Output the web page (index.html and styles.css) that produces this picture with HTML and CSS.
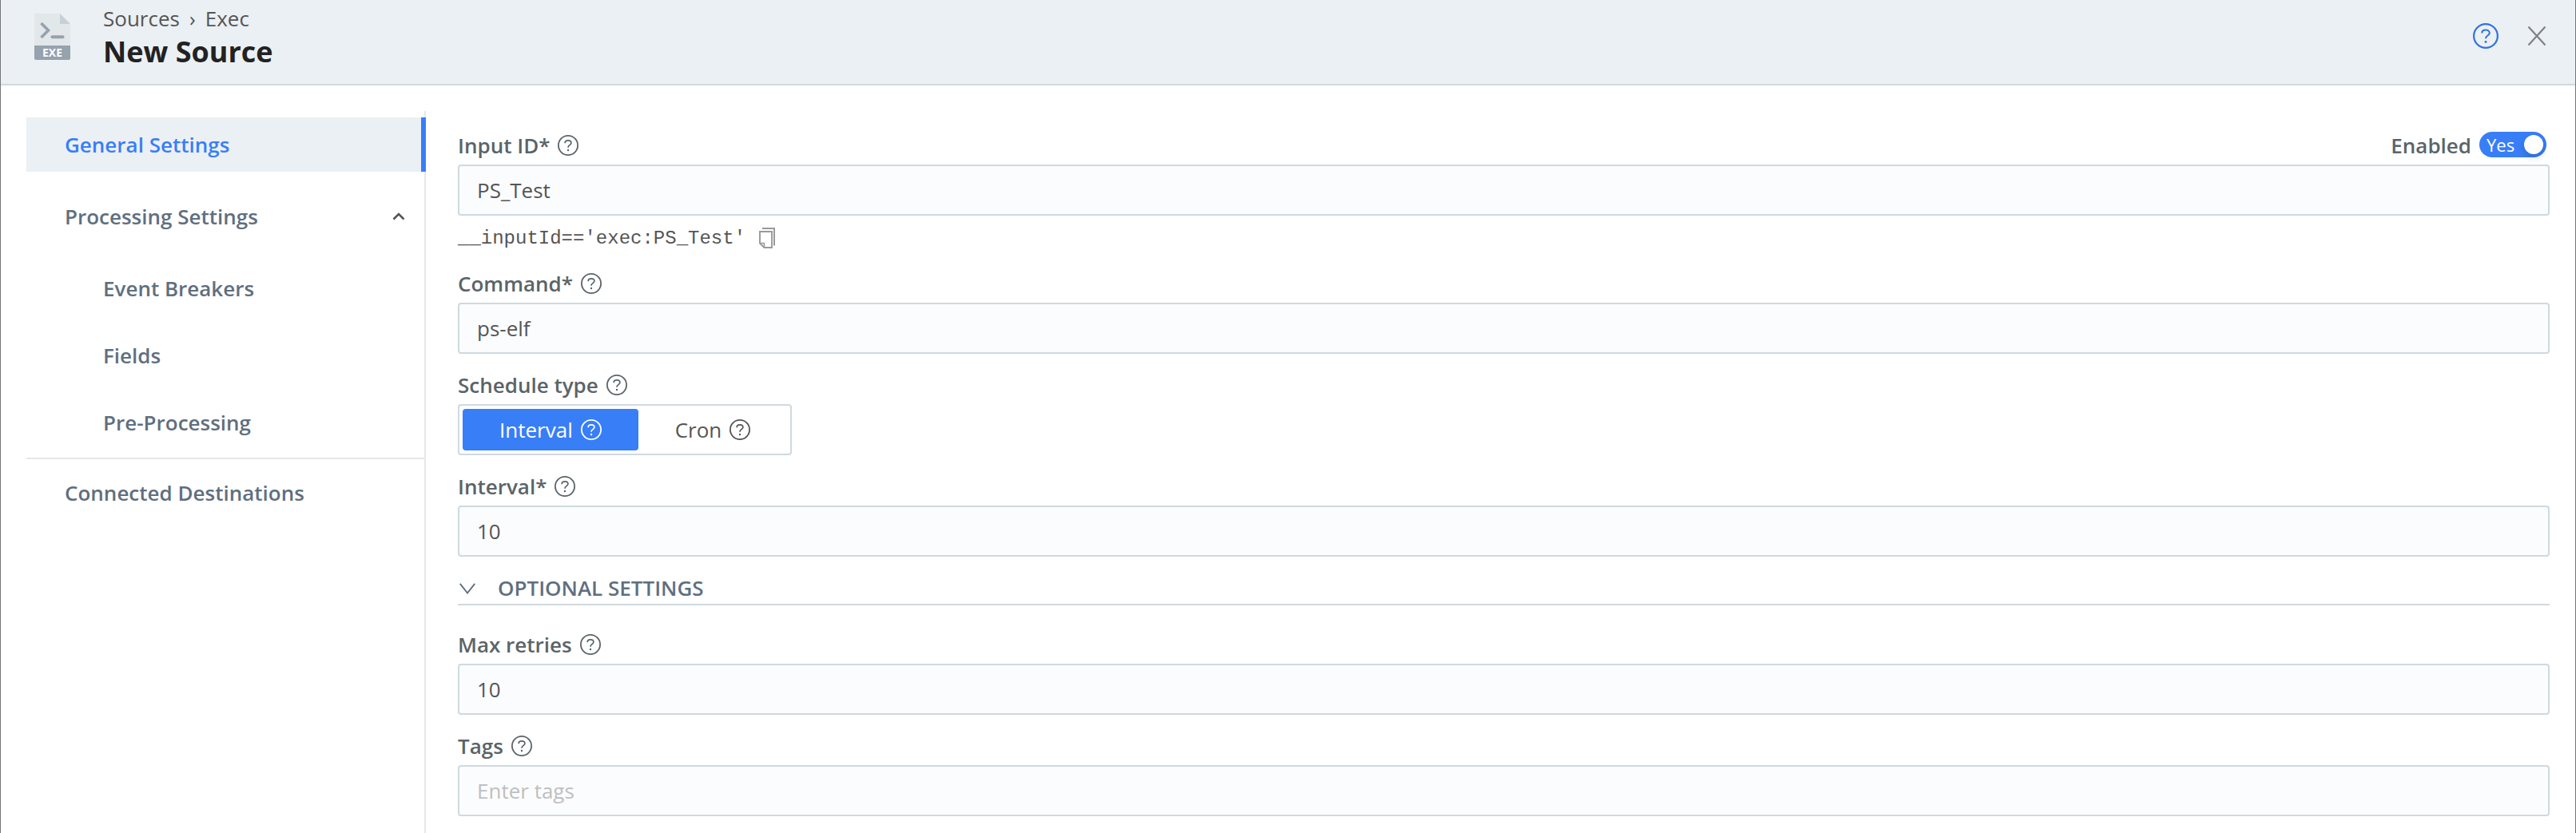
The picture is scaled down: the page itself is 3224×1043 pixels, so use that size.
FILE: index.html
```html
<!DOCTYPE html>
<html lang="en">

<head>
    <meta charset="UTF-8">
    <meta name="viewport" content="width=device-width, initial-scale=1.0">
    <title>New Source</title>
    <link rel="stylesheet" href="styles.css">
</head>

<body>
    <!-- shared icons -->
    <svg class="sprite" width="0" height="0">
        <symbol id="help" viewBox="0 0 26 26">
            <circle cx="13" cy="13" r="12.1" fill="none" stroke="currentColor" stroke-width="1.8" />
            <path d="M9.2 10.2V9.8C9.2 8 10.9 6.9 13 6.9s3.9 1.2 3.9 3.2c0 2.3-3.8 2.700-3.8 5v.6" fill="none" stroke="currentColor" stroke-width="1.7" />
            <circle cx="13" cy="19" r="1.2" fill="currentColor" />
        </symbol>
    </svg>

    <div class="drawer">
        <header class="header">
            <svg class="source-icon" width="45" height="58" viewBox="0 0 45 58">
                <path d="M0 1a1 1 0 0 1 1-1h31l13 13v28H0z" fill="#e2e7ea" />
                <path d="M32 0l13 13H32z" fill="#c6d0d7" />
                <path d="M0 40h45v16a2 2 0 0 1-2 2H2a2 2 0 0 1-2-2z" fill="#96a2ad" />
                <path d="M8.500 12l9 9-9 9" fill="none" stroke="#96a2ad" stroke-width="3.600" />
                <path d="M22.500 29.300h13" fill="none" stroke="#96a2ad" stroke-width="4" stroke-linecap="round" />
                <text class="source-icon-text" x="22.500" y="54" text-anchor="middle">EXE</text>
            </svg>
            <div class="titles">
                <div class="breadcrumb"><span>Sources</span><span class="sep">›</span><span>Exec</span></div>
                <h1>New Source</h1>
            </div>
            <div class="header-actions">
                <svg class="header-help" width="32" height="32"><use href="#help" /></svg>
                <svg class="close" width="24" height="26" viewBox="0 0 24 26">
                    <path d="M1.500 1.500l21 23M22.500 1.500l-21 23" stroke="currentColor" stroke-width="2.200" />
                </svg>
            </div>
        </header>

        <div class="content">
            <nav class="sidebar">
                <a class="nav-item active">General Settings</a>
                <a class="nav-item">Processing Settings
                    <svg class="nav-caret" width="16" height="12" viewBox="0 0 16 12">
                        <path d="M1.500 9.500L8 3l6.500 6.500" fill="none" stroke="currentColor" stroke-width="2.600" />
                    </svg>
                </a>
                <div class="sub-nav">
                    <a class="nav-item">Event Breakers</a>
                    <a class="nav-item">Fields</a>
                    <a class="nav-item">Pre-Processing</a>
                </div>
                <a class="nav-item">Connected Destinations</a>
            </nav>

            <main class="form">
                <div class="field">
                    <div class="label-row">
                        <label for="inputId">Input ID*</label>
                        <svg class="help"><use href="#help" /></svg>
                        <div class="enabled">
                            Enabled
                            <div class="toggle"><span>Yes</span><i class="knob"></i></div>
                        </div>
                    </div>
                    <input type="text" id="inputId" value="PS_Test">
                    <div class="expression">
                        <code>__inputId=='exec:PS_Test'</code>
                        <svg width="20" height="26" viewBox="0 0 20 26" fill="none" stroke="currentColor">
                            <path d="M4 1h15v21.500" stroke-width="2" />
                            <path d="M1 5h15v20H6.500L1 19.500z" stroke-width="1.900" />
                            <path d="M1.500 19.500H6.500V24.500" stroke-width="1.500" />
                        </svg>
                    </div>
                </div>

                <div class="field">
                    <div class="label-row">
                        <label for="command">Command*</label>
                        <svg class="help"><use href="#help" /></svg>
                    </div>
                    <input type="text" id="command" value="ps-elf">
                </div>

                <div class="field">
                    <div class="label-row">
                        <label>Schedule type</label>
                        <svg class="help"><use href="#help" /></svg>
                    </div>
                    <div class="segmented">
                        <div class="segment selected">Interval <svg class="help"><use href="#help" /></svg></div>
                        <div class="segment">Cron <svg class="help"><use href="#help" /></svg></div>
                    </div>
                </div>

                <div class="field">
                    <div class="label-row">
                        <label for="interval">Interval*</label>
                        <svg class="help"><use href="#help" /></svg>
                    </div>
                    <input type="text" id="interval" value="10">
                </div>

                <div class="section-title">
                    <svg width="20" height="14" viewBox="0 0 20 14">
                        <path d="M.800.800L10 12.500 19.200.800" fill="none" stroke="currentColor" stroke-width="1.900" />
                    </svg>
                    OPTIONAL SETTINGS
                </div>

                <div class="field">
                    <div class="label-row">
                        <label for="retries">Max retries</label>
                        <svg class="help"><use href="#help" /></svg>
                    </div>
                    <input type="text" id="retries" value="10">
                </div>

                <div class="field">
                    <div class="label-row">
                        <label for="tags">Tags</label>
                        <svg class="help"><use href="#help" /></svg>
                    </div>
                    <input type="text" id="tags" placeholder="Enter tags">
                </div>
            </main>
        </div>
    </div>
</body>

</html>
```
FILE: styles.css
```css
* {
    box-sizing: border-box;
}

body {
    margin: 0;
    font-family: "Open Sans", "Noto Sans", sans-serif;
    font-size: 26px;
    color: #555;
    background: #fff;
}

svg {
    display: block;
    flex-shrink: 0;
}

.sprite {
    display: none;
}

.drawer {
    height: 100vh;
    display: flex;
    flex-direction: column;
    overflow: hidden;
    border-left: 1px solid #777;
    border-right: 1px solid #777;
}

/* Header */
.header {
    display: flex;
    align-items: flex-start;
    height: 107px;
    flex-shrink: 0;
    padding: 0 36px 0 42px;
    background: #ebf0f4;
    border-bottom: 2px solid #cfd9e0;
}

.source-icon {
    margin-top: 17px;
}

.source-icon-text {
    font-size: 14px;
    font-weight: 700;
    fill: #fff;
}

.titles {
    margin-left: 41px;
}

.breadcrumb {
    display: flex;
    height: 36px;
    line-height: 36px;
    margin-top: 5px;
}

.breadcrumb .sep {
    margin: 0 12px;
}

h1 {
    margin: 0;
    font-size: 36px;
    font-weight: 700;
    line-height: 48px;
    color: #222;
}

.header-actions {
    display: flex;
    align-items: center;
    gap: 36px;
    margin-left: auto;
    margin-top: 29px;
}

.header-help {
    color: #2f72e4;
}

.close {
    color: #808080;
}

/* Sidebar */
.content {
    display: flex;
    flex: 1;
    padding: 32px 32px 0;
}

.sidebar {
    width: 500px;
    flex-shrink: 0;
    padding-top: 8px;
    border-right: 2px solid #e6e7e8;
}

.nav-item {
    display: flex;
    align-items: center;
    justify-content: space-between;
    height: 68px;
    padding: 0 24px 0 48px;
    margin-bottom: 22px;
    font-weight: 600;
    color: #5f6f80;
}

.nav-item.active {
    margin-right: -2px;
    color: #387ef7;
    background: #ebf0f4;
    border-right: 6px solid #387ef7;
}

.nav-caret {
    color: #555;
}

.sub-nav {
    padding-bottom: 10px;
    margin-bottom: 8px;
    border-bottom: 2px solid #e6e7e8;
}

.sub-nav .nav-item {
    padding-left: 96px;
    margin-bottom: 16px;
}

.sub-nav .nav-item:last-child {
    margin-bottom: 0;
}

/* Form */
.form {
    flex: 1;
    margin-left: 40px;
    padding-top: 19px;
}

.field {
    margin-bottom: 15px;
}

.label-row {
    display: flex;
    align-items: center;
    gap: 10px;
    height: 48px;
    font-weight: 600;
    color: #5a6468;
}

.help {
    width: 26px;
    height: 26px;
}

.enabled {
    display: flex;
    align-items: center;
    gap: 10px;
    margin-left: auto;
    margin-right: 4px;
}

.toggle {
    display: flex;
    align-items: center;
    justify-content: space-between;
    width: 84px;
    height: 32px;
    padding: 0 4px 0 9px;
    margin-top: -2px;
    border-radius: 16px;
    font-size: 22px;
    font-weight: 500;
    line-height: 32px;
    color: #fff;
    background: #387ef7;
}

.knob {
    width: 24px;
    height: 24px;
    border-radius: 50%;
    background: #fff;
    box-shadow: 0 4px 8px rgba(0, 35, 11, 0.2);
}

input[type="text"] {
    display: block;
    width: 100%;
    height: 64px;
    padding: 0 22px;
    border: 2px solid #cfd9e0;
    border-radius: 4px;
    font: inherit;
    color: #555;
    background: #fbfcfe;
}

input::placeholder {
    color: #bfbfbf;
}

.expression {
    display: flex;
    align-items: center;
    gap: 17px;
    height: 56px;
    margin-bottom: -10px;
    color: #999;
}

.expression code {
    font-family: "Liberation Mono", monospace;
    font-size: 24px;
    color: #555;
}

.segmented {
    display: inline-flex;
    height: 64px;
    padding: 4px;
    border: 2px solid #cfd9e0;
    border-radius: 4px;
    vertical-align: top;
}

.segment {
    display: flex;
    align-items: center;
    gap: 10px;
    padding: 0 46px;
    border-radius: 4px;
}

.segment.selected {
    color: #fff;
    background: #387ef7;
}

.section-title {
    display: flex;
    align-items: center;
    gap: 28px;
    height: 46px;
    padding: 3px 2px 0;
    margin-bottom: 25px;
    font-weight: 600;
    color: #5f6f80;
    border-bottom: 2px solid #cfd9e0;
}

.section-title svg {
    margin-top: 3px;
}
```
